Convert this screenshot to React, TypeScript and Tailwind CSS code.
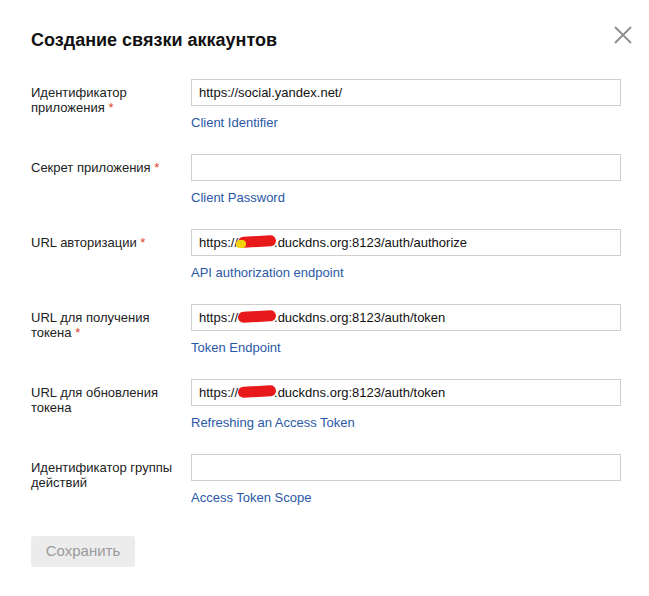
import React from "react";

type Field = {
  label: React.ReactNode;
  required?: boolean;
  value?: React.ReactNode;
  hint: string;
};

const Redacted = ({ yellow }: { yellow?: boolean }) => (
  <span className="relative inline-block w-[36px] h-[13px] align-middle -mt-[2px]">
    <span className="absolute left-0 top-[1px] w-[38px] h-[11px] rounded-full bg-[#e8191b] -rotate-3" />
    {yellow && <span className="absolute left-[-2px] top-[5px] w-[10px] h-[8px] rounded-full bg-[#f2d40c]" />}
  </span>
);

const FIELDS: Field[] = [
  { label: <>Идентификатор<br />приложения</>, required: true, value: "https://social.yandex.net/", hint: "Client Identifier" },
  { label: "Секрет приложения", required: true, hint: "Client Password" },
  { label: "URL авторизации", required: true, value: <>https://<Redacted yellow />.duckdns.org:8123/auth/authorize</>, hint: "API authorization endpoint" },
  { label: <>URL для получения<br />токена</>, required: true, value: <>https://<Redacted />.duckdns.org:8123/auth/token</>, hint: "Token Endpoint" },
  { label: <>URL для обновления<br />токена</>, value: <>https://<Redacted />.duckdns.org:8123/auth/token</>, hint: "Refreshing an Access Token" },
  { label: <>Идентификатор группы<br />действий</>, hint: "Access Token Scope" },
];

export default function App() {
  return (
    <div className="w-[649px] h-[596px] bg-white text-black" style={{ fontFamily: '"Liberation Sans", Arial, sans-serif' }}>
      <div className="flex items-start justify-between pl-[31px] pr-[16px] pt-[28px]">
        <h1 className="text-[18px] leading-[24px] font-bold text-[#111]">Создание связки аккаунтов</h1>
        <svg width="20" height="20" viewBox="0 0 20 20" className="-mt-[3px]">
          <path d="M2 2 L18 18 M18 2 L2 18" stroke="#8c8c8c" strokeWidth="1.8" />
        </svg>
      </div>

      <div className="flex flex-col gap-[22px] pl-[31px] pr-[28px] mt-[27px]">
        {FIELDS.map((f, i) => (
          <div key={i} className="flex">
            <div className="w-[160px] pt-[6px] text-[13px] leading-[15px] text-[#222]">
              {f.label}
              {f.required && <span className="text-[#e0422f]"> *</span>}
            </div>
            <div className="flex-1 flex flex-col">
              <div className="h-[27px] border border-[#cfcfcf] px-[7px] flex items-center text-[13px] text-[#111] whitespace-nowrap">
                {f.value}
              </div>
              <div className="mt-[7px] text-[13px] leading-[19px] text-[#2a58a6]">{f.hint}</div>
            </div>
          </div>
        ))}
      </div>

      <div className="pl-[31px] mt-[29px]">
        <button className="h-[31px] w-[104px] rounded-[3px] bg-[#ececec] text-[15px] text-[#9a9a9a]">Сохранить</button>
      </div>
    </div>
  );
}
